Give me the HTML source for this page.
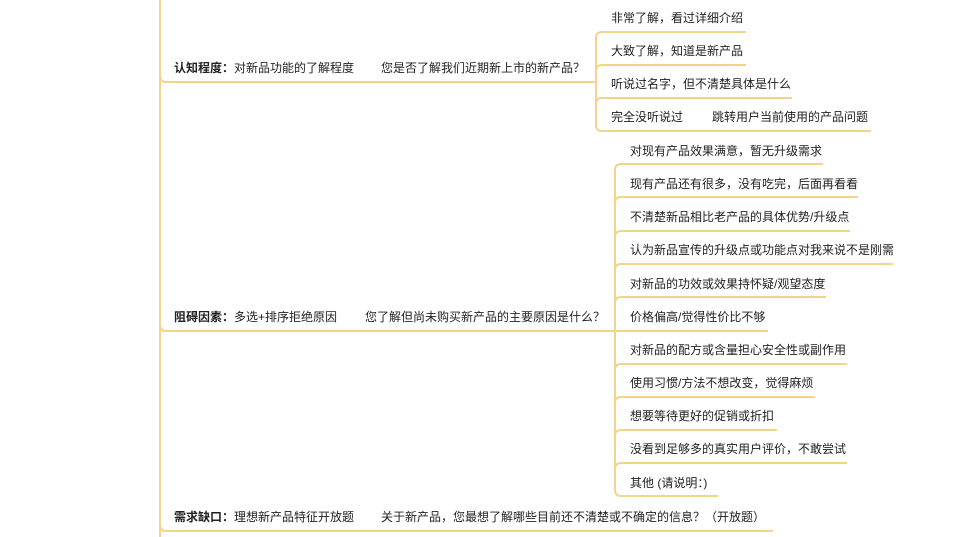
<!DOCTYPE html>
<html><head><meta charset="utf-8"><style>
body{margin:0;width:954px;height:537px;background:#fff;overflow:hidden;position:relative;font-family:"Liberation Sans","Noto Sans CJK SC",sans-serif;font-size:12px;color:#222}
.t{position:absolute;white-space:nowrap;line-height:16px}
b{font-weight:bold}
svg{position:absolute;left:0;top:0}
</style></head><body>
<svg width="954" height="537" fill="none" stroke="#f0d58a" stroke-width="2">
<path d="M160 0 V537"/>
<path d="M160 76 Q160 82 166 82 H596"/>
<path d="M160 325 Q160 331 166 331 H615"/>
<path d="M160 525 Q160 531 166 531 H773"/>
<path d="M596 38 V125"/>
<path d="M596 38 Q596 32 602 32 H746"/>
<path d="M596 71 Q596 65 602 65 H746"/>
<path d="M596 104 Q596 98 602 98 H792"/>
<path d="M596 125 Q596 131 602 131 H871"/>
<path d="M615 170 V490"/>
<path d="M615 170 Q615 164 621 164 H823"/>
<path d="M615 203 Q615 197 621 197 H858"/>
<path d="M615 237 Q615 231 621 231 H850"/>
<path d="M615 270 Q615 264 621 264 H893"/>
<path d="M615 303 Q615 297 621 297 H826"/>
<path d="M615 331 H768"/>
<path d="M615 370 Q615 364 621 364 H847"/>
<path d="M615 403 Q615 397 621 397 H815"/>
<path d="M615 436 Q615 430 621 430 H777"/>
<path d="M615 469 Q615 463 621 463 H847"/>
<path d="M615 490 Q615 496 621 496 H718"/>
</svg>
<div class="t" style="left:174px;top:60px"><b>认知程度：</b>对新品功能的了解程度</div>
<div class="t" style="left:381px;top:60px">您是否了解我们近期新上市的新产品？</div>
<div class="t" style="left:611px;top:10px">非常了解，看过详细介绍</div>
<div class="t" style="left:611px;top:43px">大致了解，知道是新产品</div>
<div class="t" style="left:611px;top:76px">听说过名字，但不清楚具体是什么</div>
<div class="t" style="left:611px;top:109px">完全没听说过</div>
<div class="t" style="left:712px;top:109px">跳转用户当前使用的产品问题</div>
<div class="t" style="left:174px;top:309px"><b>阻碍因素：</b>多选+排序拒绝原因</div>
<div class="t" style="left:365px;top:309px">您了解但尚未购买新产品的主要原因是什么？</div>
<div class="t" style="left:630px;top:143px">对现有产品效果满意，暂无升级需求</div>
<div class="t" style="left:630px;top:176px">现有产品还有很多，没有吃完，后面再看看</div>
<div class="t" style="left:630px;top:209px">不清楚新品相比老产品的具体优势/升级点</div>
<div class="t" style="left:630px;top:242px">认为新品宣传的升级点或功能点对我来说不是刚需</div>
<div class="t" style="left:630px;top:276px">对新品的功效或效果持怀疑/观望态度</div>
<div class="t" style="left:630px;top:309px">价格偏高/觉得性价比不够</div>
<div class="t" style="left:630px;top:342px">对新品的配方或含量担心安全性或副作用</div>
<div class="t" style="left:630px;top:375px">使用习惯/方法不想改变，觉得麻烦</div>
<div class="t" style="left:630px;top:408px">想要等待更好的促销或折扣</div>
<div class="t" style="left:630px;top:441px">没看到足够多的真实用户评价，不敢尝试</div>
<div class="t" style="left:630px;top:475px">其他 (请说明：)</div>
<div class="t" style="left:174px;top:509px"><b>需求缺口：</b>理想新产品特征开放题</div>
<div class="t" style="left:381px;top:509px">关于新产品，您最想了解哪些目前还不清楚或不确定的信息？（开放题）</div>
</body></html>
